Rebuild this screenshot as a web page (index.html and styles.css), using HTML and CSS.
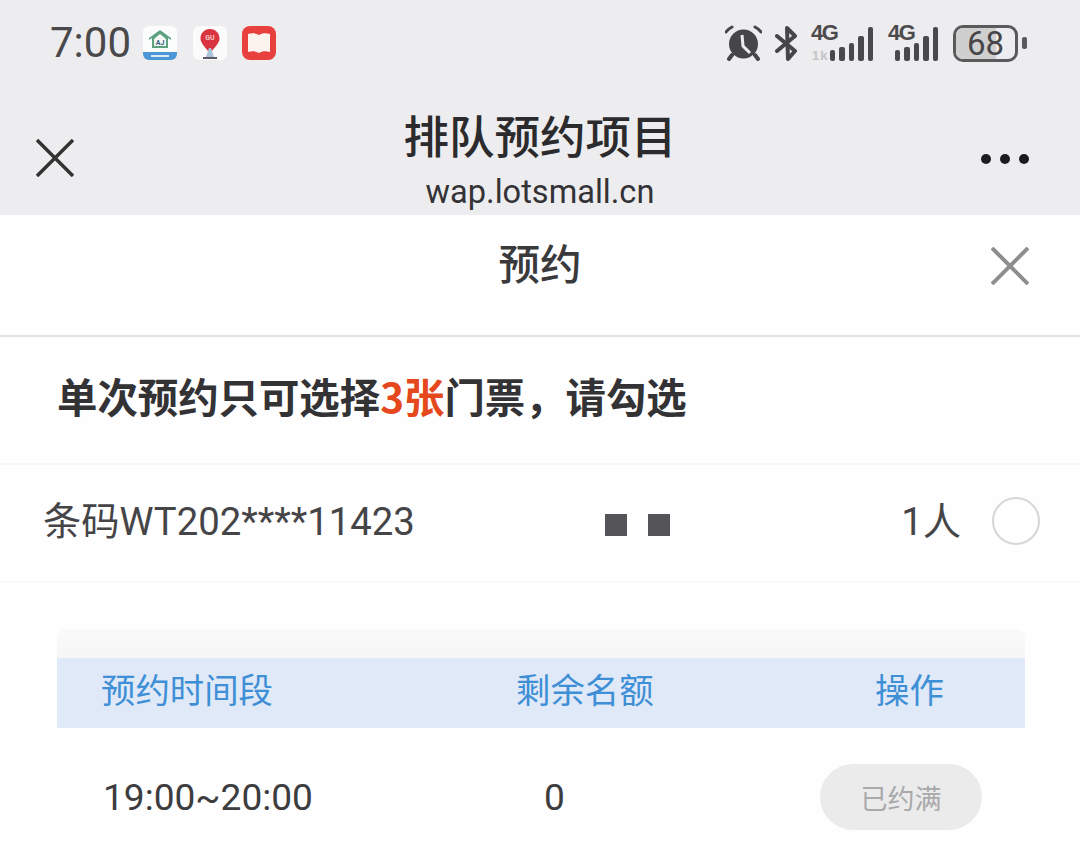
FILE: index.html
```html
<!DOCTYPE html>
<html lang="zh-CN">
<head>
    <meta charset="UTF-8">
    <meta name="viewport" content="width=device-width, initial-scale=1.0">
    <title>排队预约项目</title>
    <link rel="stylesheet" href="styles.css">
</head>
<body>
    <header class="top">
        <div class="status">
            <div class="status-left">
                <span class="time">7:00</span>
                <svg class="app" viewBox="0 0 34 34">
                    <rect width="34" height="34" rx="6" fill="#fbfdfc"/>
                    <path d="M0 26h34v2a6 6 0 0 1-6 6H6a6 6 0 0 1-6-6z" fill="#4b96d6"/>
                    <path d="M17 4L6 12v2l3-2v10h16V12l3 2v-2z" fill="#5da27c"/>
                    <path d="M11 13l6-5 6 5v7H11z" fill="#f4f8f6"/>
                    <text x="17" y="19" class="app-text" fill="#39617a">AJ</text>
                    <rect x="8" y="29" width="18" height="2" fill="#d8ebf7"/>
                </svg>
                <svg class="app" viewBox="0 0 34 34">
                    <rect width="34" height="34" rx="6" fill="#fbfbfb"/>
                    <path d="M17 3c-6 0-9.500 4.500-9.500 9.500 0 4 3.500 7.500 9.500 15 6-7.500 9.500-11 9.500-15C26.500 7.500 23 3 17 3z" fill="#d9343f"/>
                    <text x="17" y="14" class="app-text" fill="#f6c9c9">GU</text>
                    <path d="M16 22h2l3 9h-8z" fill="#a9c3d8"/>
                    <rect x="10" y="31" width="14" height="2" fill="#5c5a66"/>
                </svg>
                <svg class="app" viewBox="0 0 34 34">
                    <rect width="34" height="34" rx="8" fill="#e8403c"/>
                    <path d="M6 8c4-1 8-1 11 1 3-2 7-2 11-1v18c-4-1-8-1-11 1-3-2-7-2-11-1z" fill="#fdf3ee"/>
                </svg>
            </div>
            <div class="status-right">
                <svg class="ic-alarm" viewBox="0 0 37 36">
                    <circle cx="18.500" cy="19" r="14.500" fill="#464548"/>
                    <path d="M17 10l1 11 7 7" fill="none" stroke="#edecee" stroke-width="3"/>
                    <path d="M1 7q2-3 6-5M36 7q-2-3-6-5" fill="none" stroke="#464548" stroke-width="3" stroke-linecap="round"/>
                    <path d="M4 34l3-4M33 34l-3-4" stroke="#464548" stroke-width="4" stroke-linecap="round"/>
                </svg>
                <svg class="ic-bt" viewBox="0 0 22 35">
                    <path d="M2 10l18 15-7 8-1-31 8 8L2 25" fill="none" stroke="#464548" stroke-width="4" stroke-linejoin="round" stroke-linecap="round"/>
                </svg>
                <div class="signal">
                    <span class="net">4G</span>
                    <span class="one-b">1k</span>
                    <div class="bars">
                        <i class="b1"></i><i class="b2"></i><i class="b3"></i><i class="b4"></i><i class="b5"></i>
                    </div>
                </div>
                <div class="signal signal-b">
                    <span class="net">4G</span>
                    <div class="bars">
                        <i class="b1"></i><i class="b2"></i><i class="b3"></i><i class="b4"></i><i class="b5"></i>
                    </div>
                </div>
                <div class="battery">
                    <div class="battery-body"><span class="battery-fill"></span><span class="battery-num">68</span></div>
                    <span class="battery-tip"></span>
                </div>
            </div>
        </div>
        <div class="nav">
            <svg class="nav-close" viewBox="0 0 38 38">
                <path d="M1 1l36 36M37 1L1 37" stroke="#333" stroke-width="3.500"/>
            </svg>
            <div class="nav-title">
                <div class="title">排队预约项目</div>
                <div class="url">wap.lotsmall.cn</div>
            </div>
            <div class="dots"><i></i><i></i><i></i></div>
        </div>
    </header>

    <main>
        <div class="sheet-head">
            <h2>预约</h2>
            <svg class="sheet-close" viewBox="0 0 38 38">
                <path d="M1 1l36 36M37 1L1 37" stroke="#8e8e8e" stroke-width="4"/>
            </svg>
        </div>
        <div class="notice">单次预约只可选择<span class="hl">3张</span>门票，请勾选</div>
        <div class="ticket">
            <span class="code">条码WT202****11423</span>
            <span class="mask"><i></i><i></i></span>
            <span class="count">1人</span>
            <span class="radio"></span>
        </div>
        <div class="slots">
            <div class="slots-cap"></div>
            <div class="slots-row slots-head">
                <span class="c1">预约时间段</span>
                <span class="c2">剩余名额</span>
                <span class="c3">操作</span>
            </div>
            <div class="slots-row slots-item">
                <span class="c1">19:00~20:00</span>
                <span class="c2">0</span>
                <span class="c3"><button class="full">已约满</button></span>
            </div>
        </div>
    </main>
</body>
</html>
```

FILE: styles.css
```css
* {
    box-sizing: border-box;
}
body {
    margin: 0;
    height: 848px;
    overflow: hidden;
    background-color: #fefefe;
    font-family: "Noto Sans CJK SC", "Noto Sans", sans-serif;
    color: #3b3a3d;
}
.top {
    height: 215px;
    background-color: #edecee;
    padding-top: 22px;
}
.status {
    display: flex;
    justify-content: space-between;
    align-items: center;
    height: 42px;
    padding: 0 53px 0 50px;
}
.status-left, .status-right {
    display: flex;
    align-items: center;
}
.time {
    font-family: Roboto, sans-serif;
    font-size: 42px;
    line-height: 42px;
    color: #49484b;
    margin-right: 12px;
}
.app {
    width: 34px;
    height: 34px;
    margin-right: 15.500px;
}
.app-text {
    font-family: Roboto, sans-serif;
    font-size: 7px;
    font-weight: 700;
    text-anchor: middle;
}
.ic-alarm {
    width: 37px;
    height: 36px;
    margin-right: 13px;
}
.ic-bt {
    width: 22px;
    height: 35px;
    margin-right: 14px;
}
.signal {
    position: relative;
    width: 62px;
    height: 36px;
    margin-right: 15px;
}
.signal-b {
    width: 50px;
}
.net {
    position: absolute;
    left: 0;
    top: -3px;
    font-family: "Liberation Sans", sans-serif;
    font-size: 22px;
    font-weight: 700;
    line-height: 22px;
    letter-spacing: -1.500px;
    color: #4b4a4d;
}
.one-b {
    position: absolute;
    left: 1px;
    bottom: -1px;
    font-family: "Liberation Sans", sans-serif;
    font-size: 13px;
    font-weight: 700;
    line-height: 12px;
    letter-spacing: 1px;
    color: #c4c3c6;
}
.bars {
    position: absolute;
    right: 0;
    bottom: 0;
    display: flex;
    align-items: flex-end;
    gap: 4px;
}
.bars i {
    display: block;
    width: 5.500px;
    background-color: #49484b;
    border-radius: 2px;
}
.bars .b1 { height: 11px; }
.bars .b2 { height: 14px; }
.bars .b3 { height: 18px; }
.bars .b4 { height: 25px; }
.bars .b5 { height: 34px; }
.battery {
    display: flex;
    align-items: center;
}
.battery-body {
    position: relative;
    width: 65px;
    height: 37px;
    border: 3px solid #5a595c;
    border-radius: 10px;
    overflow: hidden;
}
.battery-fill {
    position: absolute;
    left: 0;
    top: 0;
    bottom: 0;
    width: 68%;
    background-color: #cfcfd0;
}
.battery-num {
    position: relative;
    display: block;
    text-align: center;
    font-family: Roboto, sans-serif;
    font-size: 33px;
    line-height: 31px;
    color: #464548;
}
.battery-tip {
    width: 5px;
    height: 12px;
    margin-left: 4px;
    border-radius: 2px;
    background-color: #5a595c;
}
.nav {
    display: grid;
    grid-template-columns: 1fr auto 1fr;
    padding: 0 51px;
    height: 129px;
}
.nav-close {
    width: 38px;
    height: 38px;
    margin: 75px 0 0 -15px;
}
.nav-title {
    padding-top: 39px;
    text-align: center;
    white-space: nowrap;
}
.title {
    font-size: 45.500px;
    font-weight: 500;
    line-height: 62px;
    color: #2b2a2d;
}
.url {
    font-family: Roboto, sans-serif;
    font-size: 32.600px;
    line-height: 40px;
    color: #333236;
    margin-top: 7px;
}
.dots {
    display: flex;
    justify-content: flex-end;
    gap: 9px;
    margin-top: 90px;
    height: 10px;
}
.dots i {
    display: block;
    width: 10px;
    height: 10px;
    border-radius: 50%;
    background-color: #1c1c1e;
}
.sheet-head {
    position: relative;
    height: 122px;
    border-bottom: 2px solid #e3e3e4;
    display: flex;
    align-items: center;
    justify-content: center;
}
.sheet-head h2 {
    margin: 0 0 26px;
    font-size: 41.500px;
    font-weight: 500;
    line-height: 60px;
    color: #3a393c;
}
.sheet-close {
    position: absolute;
    right: 51px;
    top: 32px;
    width: 38px;
    height: 38px;
}
.notice {
    height: 128px;
    padding: 28px 0 0 57px;
    font-size: 40.400px;
    font-weight: 700;
    line-height: 62px;
    color: #333235;
    border-bottom: 2px solid #f6f6f6;
    white-space: nowrap;
}
.hl {
    color: #e4481c;
}
.ticket {
    position: relative;
    display: flex;
    align-items: center;
    height: 118px;
    padding: 0 40px 4px 43px;
    border-bottom: 2px solid #f9f9f9;
    font-family: Roboto, "Noto Sans CJK SC", sans-serif;
    font-size: 38.300px;
    color: #454447;
}
.code {
    flex: 1;
    margin-bottom: 6px;
    white-space: nowrap;
}
.mask {
    position: absolute;
    left: 605px;
    top: 49px;
    display: flex;
    gap: 21.500px;
}
.mask i {
    display: block;
    width: 21.500px;
    height: 22px;
    background-color: #555458;
}
.count {
    margin: 0 31px 6px 0;
}
.radio {
    width: 48px;
    height: 48px;
    border: 2px solid #d6d6d6;
    border-radius: 50%;
}
.slots {
    margin: 46px 55px 0 57px;
}
.slots-cap {
    height: 29px;
    background: linear-gradient(#fbfafb, #f7f6f7);
    border-radius: 8px 8px 0 0;
}
.slots-row {
    display: flex;
    align-items: center;
    font-family: Roboto, "Noto Sans CJK SC", sans-serif;
    white-space: nowrap;
}
.slots-head {
    height: 70px;
    padding-bottom: 10px;
    background-color: #e0e9f7;
    color: #3e8fd6;
    font-size: 34.400px;
}
.slots-item {
    height: 138px;
    font-size: 37.100px;
    color: #3d3c3f;
}
.c1 {
    width: 380px;
    padding-left: 44px;
}
.c2 {
    width: 275px;
    padding-left: 79px;
}
.c3 {
    padding-left: 163px;
}
.slots-item .c1 {
    padding-left: 46px;
}
.slots-item .c2 {
    padding-left: 107px;
}
.slots-item .c3 {
    padding-left: 108px;
}
.full {
    display: block;
    width: 162px;
    height: 66px;
    border: none;
    border-radius: 33px;
    background-color: #ebebec;
    color: #a9a9aa;
    font-family: "Noto Sans CJK SC", sans-serif;
    font-size: 27px;
}
```
